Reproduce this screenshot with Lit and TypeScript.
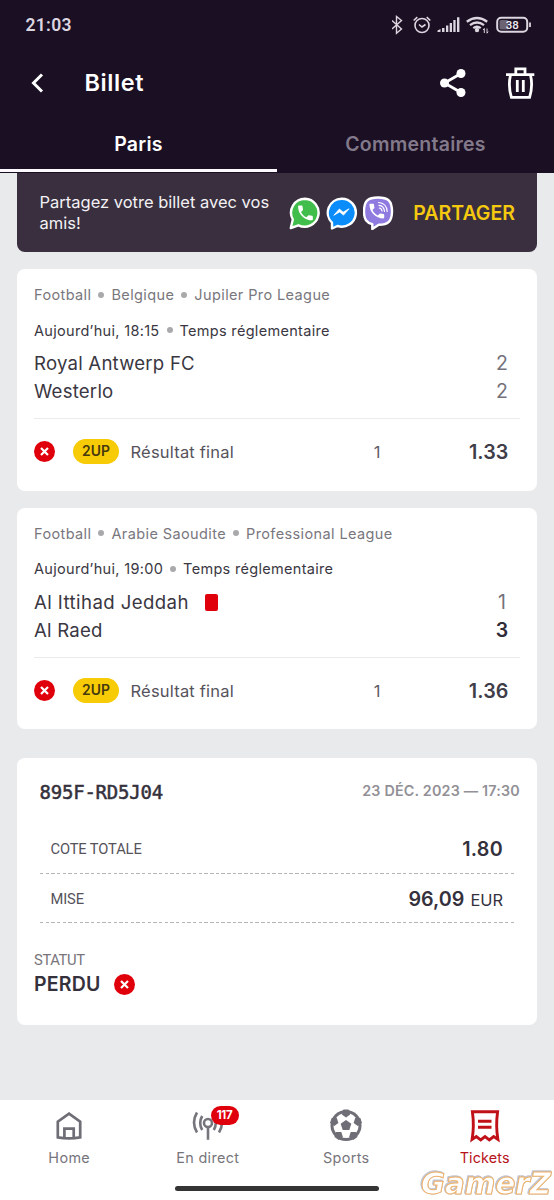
import { LitElement, html, css, svg } from "lit";
import { customElement, property } from "lit/decorators.js";

const HANDSET =
  "M6.62 10.79c1.44 2.83 3.76 5.14 6.59 6.59l2.2-2.2c.27-.27.67-.36 1.02-.24 1.12.37 2.33.57 3.57.57.55 0 1 .45 1 1V20c0 .55-.45 1-1 1-9.39 0-17-7.61-17-17 0-.55.45-1 1-1h3.5c.55 0 1 .45 1 1 0 1.25.2 2.45.57 3.57.11.35.03.74-.25 1.02z";

const pentagon = (cx: number, cy: number, r: number, start: number) =>
  [0, 1, 2, 3, 4]
    .map((i) => {
      const a = ((start + i * 72) * Math.PI) / 180;
      return `${(cx + r * Math.cos(a)).toFixed(2)},${(cy + r * Math.sin(a)).toFixed(2)}`;
    })
    .join(" ");

interface Team { name: string; score: string; red?: boolean; win?: boolean }
interface Match { crumbs: string[]; time: string; teams: Team[]; odd: string }

const MATCHES: Match[] = [
  {
    crumbs: ["Football", "Belgique", "Jupiler Pro League"],
    time: "Aujourd’hui, 18:15",
    teams: [{ name: "Royal Antwerp FC", score: "2" }, { name: "Westerlo", score: "2" }],
    odd: "1.33",
  },
  {
    crumbs: ["Football", "Arabie Saoudite", "Professional League"],
    time: "Aujourd’hui, 19:00",
    teams: [
      { name: "Al Ittihad Jeddah", score: "1", red: true },
      { name: "Al Raed", score: "3", win: true },
    ],
    odd: "1.36",
  },
];

@customElement("lost-mark")
class LostMark extends LitElement {
  static styles = css`
    :host { display: block; width: 21px; height: 21px; }
    svg { display: block; }
  `;
  render() {
    return html`<svg width="21" height="21" viewBox="0 0 21 21">
      <circle cx="10.5" cy="10.5" r="10.5" fill="#e0000b" />
      <path d="M7 7l7 7M14 7l-7 7" stroke="#fff" stroke-width="2.2" />
    </svg>`;
  }
}

@customElement("match-card")
class MatchCard extends LitElement {
  @property({ attribute: false }) match!: Match;
  static styles = css`
    :host {
      display: block; box-sizing: border-box; height: 221.7px; background: #fff; border-radius: 8px;
      padding: 13.7px 17px 0 17px; color: #3a3742;
    }
    .line { display: flex; align-items: center; gap: 7px; height: 24px; font-size: 14.5px; white-space: nowrap; letter-spacing: 0.31px; }
    .crumbs { color: #79777d; letter-spacing: 0.39px; }
    .dot { width: 6px; height: 6px; border-radius: 50%; background: #a9a8ab; }
    .time { margin-top: 11.5px; }
    .teams { margin-top: 7.3px; padding-bottom: 12.5px; border-bottom: 1.5px solid #ebebed; }
    .team { display: flex; align-items: center; height: 28px; font-size: 18.6px; letter-spacing: 0.22px; }
    .score { margin-left: auto; width: 14px; margin-right: 11px; text-align: center; font-size: 19.5px; letter-spacing: 0; color: #74727a; }
    .win { font-weight: 600; color: #2f2c38; }
    .carded { letter-spacing: 0.42px; }
    .redcard { width: 13px; height: 17px; margin-left: 16px; border-radius: 2px; background: #e0000b; }
    .pick { display: grid; grid-template-columns: 39px 57.5px 1fr 40px 123px; align-items: center; height: 66px; font-size: 16.5px; }
    .pill {
      width: 46px; height: 25px; border-radius: 13px; background: #f7cb05; color: #46390f;
      font-size: 13.9px; font-weight: 600; line-height: 25.5px; text-align: center;
    }
    .market { letter-spacing: 0.2px; color: #56535c; }
    .sel { text-align: center; color: #5f5c65; }
    .odd { padding-right: 11.5px; text-align: right; font-size: 19.7px; font-weight: 600; letter-spacing: 0.1px; color: #403d48; }
  `;
  render() {
    const m = this.match;
    return html`
      <div class="line crumbs">
        ${m.crumbs.map((c, i) => html`${i ? html`<i class="dot"></i>` : ""}<span>${c}</span>`)}
      </div>
      <div class="line time"><span>${m.time}</span><i class="dot"></i><span>Temps réglementaire</span></div>
      <div class="teams">
        ${m.teams.map((t) => html`<div class="team">
          <span class=${t.red ? "carded" : ""}>${t.name}</span>${t.red ? html`<i class="redcard"></i>` : ""}
          <span class="score ${t.win ? "win" : ""}">${t.score}</span>
        </div>`)}
      </div>
      <div class="pick">
        <lost-mark></lost-mark>
        <span class="pill">2UP</span>
        <span class="market">Résultat final</span>
        <span class="sel">1</span>
        <span class="odd">${m.odd}</span>
      </div>`;
  }
}

@customElement("app-root")
class AppRoot extends LitElement {
  static styles = css`
    :host {
      display: flex; flex-direction: column; position: relative; width: 554px; height: 1200px; overflow: hidden;
      background: #e9eaec; font-family: Inter, Roboto, sans-serif; color: #34313c;
    }
    svg { display: block; flex: none; }
    header { flex: none; height: 173px; background: #1b0f23; color: #fff; }
    .status { display: flex; align-items: center; height: 50px; padding: 0 22px 0 25.5px; color: #dcd6e0; }
    .clock { margin-right: auto; font-family: Roboto, sans-serif; font-size: 17.5px; font-weight: 600; letter-spacing: 0.3px; }
    .bar { display: flex; align-items: center; height: 66px; padding: 0 18px 0 28px; }
    .title { margin: 0 auto 0 36.5px; padding-bottom: 1px; font-size: 23.5px; font-weight: 600; letter-spacing: 0.6px; }
    .trash { margin-left: 36px; }
    .tabs { display: grid; grid-template-columns: 1fr 1fr; height: 55.5px; }
    .tab { display: flex; align-items: center; justify-content: center; padding-top: 3px; font-size: 19.5px; font-weight: 600; letter-spacing: 0.25px; color: #82798a; border-bottom: 3px solid transparent; }
    .active { color: #fff; border-color: #fdfaff; }
    main { flex: 1; padding: 0 17px; }
    .share { display: flex; align-items: center; box-sizing: border-box; height: 79px; padding: 0 22px 0 22.5px; background: #392f3f; border-radius: 0 0 8px 8px; color: #f3f1f4; }
    .share-text { width: 249.5px; font-size: 16.5px; line-height: 20.2px; }
    .apps { display: flex; gap: 5px; }
    .cta { margin-left: auto; font-size: 19.5px; font-weight: 600; letter-spacing: 0; color: #f4c90f; }
    match-card { margin-top: 17px; }
    .summary { box-sizing: border-box; height: 267px; margin-top: 28.4px; padding: 20px 17px 0; background: #fff; border-radius: 8px; }
    .head { display: flex; align-items: center; justify-content: space-between; height: 28px; padding-left: 5.5px; }
    .code { font-family: "DejaVu Sans Mono", monospace; font-size: 19px; letter-spacing: -0.22px; -webkit-text-stroke: 0.5px #34313c; }
    .date { padding-bottom: 2px; font-size: 14.3px; font-weight: 600; letter-spacing: 0.2px; color: #929096; }
    .rows { margin: 19px 6px 0; }
    .row {
      display: flex; align-items: center; justify-content: space-between; box-sizing: border-box; height: 49.3px; padding: 0 11px 0 10.5px;
      background: repeating-linear-gradient(90deg, #b5b4b8 0 3.4px, transparent 3.4px 5.67px) 0 100% / 100% 1.4px no-repeat;
    }
    .label { font-family: Roboto, sans-serif; font-size: 14.7px; letter-spacing: -0.12px; color: #55525b; }
    .value { font-size: 19.7px; font-weight: 600; letter-spacing: 0.3px; }
    .amount { letter-spacing: 0; }
    .unit { margin-left: 6px; font-size: 16.4px; font-weight: 400; }
    .statut { margin-top: 26px; font-family: Roboto, sans-serif; font-size: 14.8px; line-height: 22px; letter-spacing: -0.4px; color: #77757b; }
    .lost { display: flex; align-items: center; gap: 13px; height: 26px; font-size: 19.5px; font-weight: 600; letter-spacing: 0.2px; }
    nav { flex: none; display: grid; grid-template-columns: repeat(4, 1fr); align-items: start; box-sizing: border-box; height: 100px; padding-top: 9px; background: #fff; }
    .item { position: relative; display: flex; flex-direction: column; align-items: center; color: #77757c; }
    .item span { margin-top: 4px; font-size: 14.4px; line-height: 22px; letter-spacing: 0.36px; }
    .current { color: #b81219; }
    .item.current span { letter-spacing: 0.15px; }
    .item .badge { position: absolute; left: 72px; top: -3px; width: 28px; height: 18.5px; margin: 0; border-radius: 10px; background: #e0000b; color: #fff; font-size: 11.5px; font-weight: 700; line-height: 19px; text-align: center; letter-spacing: -0.4px; }
    .handle { position: absolute; left: 174.5px; bottom: 9px; width: 204.5px; height: 5px; border-radius: 3px; background: #343434; }
    .mark { position: absolute; left: 416px; bottom: 0; filter: drop-shadow(0.6px 0.6px 0 #b0b5ca) drop-shadow(-0.5px -0.5px 0 #c4c6d2); }
    .mark text { font: italic 700 29.5px "DejaVu Sans", sans-serif; }
  `;

  private status() {
    return html`
      <svg width="140" height="24" viewBox="392 13 140 24" fill="none" stroke="#dcd6e0" stroke-width="1.4">
        <path d="M392 20.5l9.5 8.5-5 4.2V16.5l5 4-9.5 8.5" />
        <circle cx="422" cy="25.5" r="7" stroke-width="1.6" />
        <path d="M419 24.5l3 2.5 3.5-2.5M413.7 20.5l3.6-3.4M430.3 20.5l-3.6-3.4" stroke-width="1.6" />
        <g fill="#dcd6e0" stroke="none">
          <path d="M437.5 32v-1.5l3-1.5v3zM442 28h2.5v4h-2.5zM446 25.5h2.3v6.5h-2.3zM449.7 23h2.3v9h-2.3zM453.3 20h2.3v12h-2.3zM457 17.3h2.4v14.700h-2.4z" />
          <circle cx="477" cy="30" r="2.2" />
        </g>
        <g stroke-width="2.3">
          <path d="M466.8 21.7q10.2-7.4 20.4 0M470 25.2q7-5.4 14 0M473.3 28.2q3.7-2.8 7.4 0" />
        </g>
        <path d="M484.3 33v-4.5l-1.2 1.5M487 28.5v4.7l1.2-1.5" stroke-width="1" />
        <rect x="497.2" y="17.7" width="30" height="14" rx="4" stroke-width="2" />
        <rect x="499.5" y="20" width="9" height="9.5" rx="1.5" fill="#6b6272" stroke="none" />
        <path d="M530 22.5v4.5" stroke-width="1.8" />
        <text x="512.3" y="29" text-anchor="middle" font-family="Roboto" font-size="11.5" font-weight="500" fill="#f0ecf2" stroke="none">38</text>
      </svg>`;
  }

  private apps() {
    return html`<div class="apps">
      <svg width="32" height="34" viewBox="0 -0.5 32 34">
        <path d="M16 2.2a14 14 0 1 1-6.5 26.6L1.8 31.5l2-8.5A14 14 0 0 1 16 2.2z" fill="#41bd4c" stroke="#fff" stroke-width="2.4" stroke-linejoin="round" />
        <path transform="translate(6.6 6.6) scale(.82)" d=${HANDSET} fill="#fff" />
      </svg>
      <svg width="32" height="34" viewBox="0.5 -0.5 32 34">
        <path d="M16 2.2a14 14 0 1 1-4 27.3L6.5 32v-5.8A14 14 0 0 1 16 2.2z" fill="#0a8dfb" stroke="#fff" stroke-width="2.4" stroke-linejoin="round" />
        <path d="M8.3 18.8l5.6-6.3 3.7 3.2 6-3.4-5.6 6.3-3.8-3.2z" fill="#fff" stroke="#fff" stroke-width=".8" stroke-linejoin="round" />
      </svg>
      <svg width="32" height="34" viewBox="1 0 32 34">
        <path d="M16 1.5c10 0 14 3 14 14 0 10-4 13.2-13.2 13.3L10.3 33v-4.9C4.5 26.5 2 23.5 2 15.5c0-11 4-14 14-14z" fill="#8f7be0" stroke="#fff" stroke-width="2.4" stroke-linejoin="round" />
        <path transform="translate(5 5.2) scale(.82)" d=${HANDSET} fill="#fff" />
        <path d="M16.5 6.5q8 .5 8.7 9M17 9.3q5 .5 5.5 6M17.3 12q2.4.3 2.7 3" fill="none" stroke="#fff" stroke-width="1.2" stroke-linecap="round" />
      </svg>
    </div>`;
  }

  private ball() {
    const rim = [0, 1, 2, 3, 4].map((i) => {
      const a = ((-90 + i * 72) * Math.PI) / 180;
      return svg`<polygon points=${pentagon(16 + 12.4 * Math.cos(a), 16 + 12.4 * Math.sin(a), 4.4, 90 + i * 72)} fill="#6f6d76" />`;
    });
    return html`<svg width="32" height="34" viewBox="0 -0.5 32 34">
      <circle cx="16" cy="16" r="15.5" fill="#6f6d76" />
      <circle cx="16" cy="16" r="12.5" fill="#fff" />
      ${rim}
      <polygon points=${pentagon(16, 16, 5.6, -90)} fill="#6f6d76" />
    </svg>`;
  }

  render() {
    return html`
      <header>
        <div class="status"><span class="clock">21:03</span>${this.status()}</div>
        <div class="bar">
          <svg width="20" height="24" viewBox="0 0 20 24"><path d="M14 3.5L5.5 12l8.5 8.5" fill="none" stroke="#fff" stroke-width="3" /></svg>
          <span class="title">Billet</span>
          <svg width="30" height="32" viewBox="438 67 30 32">
            <path d="M461 73.5L444.5 83 461 92.5" fill="none" stroke="#fff" stroke-width="2.8" />
            <g fill="#fff"><circle cx="461" cy="73.5" r="4.5" /><circle cx="444.5" cy="83" r="4.5" /><circle cx="461" cy="92.5" r="4.5" /></g>
          </svg>
          <svg class="trash" width="32" height="34" viewBox="504 66 32 34" fill="none" stroke="#fff" stroke-width="2.8">
            <path d="M506 74.6h28.3M515.8 74v-5.2h9.2V74M510.5 75q-2.6 11 .9 22.3h18.2q3.5-11.3.9-22.3M517.3 80v12M523.3 80v12" />
          </svg>
        </div>
        <div class="tabs"><div class="tab active">Paris</div><div class="tab">Commentaires</div></div>
      </header>
      <main>
        <div class="share">
          <div class="share-text">Partagez votre billet avec vos amis!</div>
          ${this.apps()}
          <span class="cta">PARTAGER</span>
        </div>
        ${MATCHES.map((m) => html`<match-card .match=${m}></match-card>`)}
        <section class="summary">
          <div class="head"><span class="code">895F-RD5J04</span><span class="date">23 DÉC. 2023 — 17:30</span></div>
          <div class="rows">
            <div class="row"><span class="label">COTE TOTALE</span><span class="value">1.80</span></div>
            <div class="row"><span class="label">MISE</span><span class="value amount">96,09<span class="unit">EUR</span></span></div>
          </div>
          <div class="statut">STATUT</div>
          <div class="lost">PERDU<lost-mark></lost-mark></div>
        </section>
      </main>
      <nav>
        <div class="item">
          <svg width="32" height="34" viewBox="53.3 1109 32 34" fill="none" stroke="#6f6d76" stroke-width="2.7">
            <path d="M69.3 1113.7l11.2 8v15.6q-11.2 2-22.4 0v-15.6zM64.7 1138v-9.3h9.3v9.3" />
          </svg>
          <span>Home</span>
        </div>
        <div class="item">
          <svg width="32" height="34" viewBox="192 1109 32 34" fill="none" stroke="#77757c" stroke-width="2.6">
            <circle cx="208" cy="1123" r="4" />
            <path d="M208 1127v12.7M202.2 1116q-4 7 0 14M197 1112.500q-6 10 0 20M213.800 1116q4 7 0 14M219 1112.500q6 10 0 20" />
          </svg>
          <span>En direct</span>
          <span class="badge">117</span>
        </div>
        <div class="item">${this.ball()}<span>Sports</span></div>
        <div class="item current">
          <svg width="32" height="34" viewBox="469 1109 32 34" fill="none" stroke="#c01018" stroke-width="2.9">
            <path d="M472.4 1111.7h25.2q-2 14 .3 27.7l-4.2-2.9-4.4 3.4-4.3-3.4-4.3 3.4-4.4-3.4-4.2 2.9q2.3-13.7.3-27.7zM478 1121.3h13.5M478 1127.3h13.5" />
          </svg>
          <span>Tickets</span>
        </div>
      </nav>
      <div class="handle"></div>
      <svg class="mark" width="138" height="34" viewBox="0 0 138 34">
        <text x="5" y="28.4" textLength="130" lengthAdjust="spacingAndGlyphs" fill="#fff" stroke="#f2b469" stroke-width="1">GamerZ</text>
      </svg>`;
  }
}
